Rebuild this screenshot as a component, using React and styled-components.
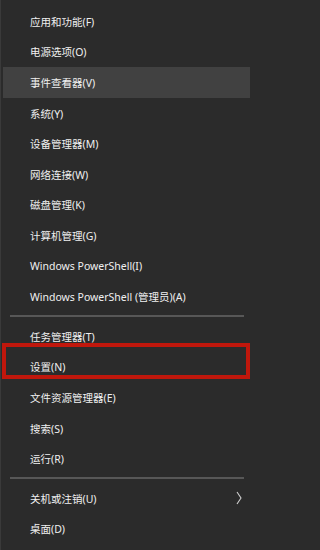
import React from "react";
import styled, { createGlobalStyle } from "styled-components";

const GlobalStyles = createGlobalStyle`
  html, body {
    margin: 0;
    padding: 0;
    background: #2b2b2b;
  }
`;

const Menu = styled.div`
  width: 250px;
  height: 550px;
  box-sizing: border-box;
  background: #2b2b2b;
  border-left: 1px solid #3a3a3a;
  padding: 6px 0 0 2px;
  overflow: hidden;
  font-family: "Noto Sans", "Noto Sans CJK SC", sans-serif;
  font-size: 10.5px;
  color: #f0f0f0;
`;

const Item = styled.div`
  position: relative;
  display: flex;
  align-items: center;
  height: 30.6px;
  padding: 0 8px 0 27px;
  background: ${(p) => (p.$hover ? "#414141" : "transparent")};
  white-space: nowrap;

  ${(p) =>
    p.$marked &&
    `
    &::after {
      content: "";
      position: absolute;
      top: -8.6px;
      left: -1px;
      right: 0;
      height: 36px;
      box-sizing: border-box;
      border: 4px solid #c0170c;
    }
  `}
`;

const Chevron = styled.svg`
  margin-left: auto;
  width: 6px;
  height: 14px;
`;

const Separator = styled.div`
  padding: 3px 6px 4px 7px;

  &::before {
    content: "";
    display: block;
    height: 2px;
    background: #575757;
  }
`;

const groups = [
  [
    { label: "应用和功能(F)" },
    { label: "电源选项(O)" },
    { label: "事件查看器(V)", hover: true },
    { label: "系统(Y)" },
    { label: "设备管理器(M)" },
    { label: "网络连接(W)" },
    { label: "磁盘管理(K)" },
    { label: "计算机管理(G)" },
    { label: "Windows PowerShell(I)" },
    { label: "Windows PowerShell (管理员)(A)" },
  ],
  [
    { label: "任务管理器(T)" },
    { label: "设置(N)", marked: true },
    { label: "文件资源管理器(E)" },
    { label: "搜索(S)" },
    { label: "运行(R)" },
  ],
  [
    { label: "关机或注销(U)", sub: true },
    { label: "桌面(D)" },
  ],
];

function App() {
  return (
    <Menu>
      <GlobalStyles />
      {groups.map((group, gi) => (
        <React.Fragment key={gi}>
          {gi > 0 && <Separator />}
          {group.map((item) => (
            <Item key={item.label} $hover={item.hover} $marked={item.marked}>
              {item.label}
              {item.sub && (
                <Chevron viewBox="0 0 6 14">
                  <polyline points="1,1 5,7 1,13" fill="none" stroke="#cfcfcf" strokeWidth="1.1" />
                </Chevron>
              )}
            </Item>
          ))}
        </React.Fragment>
      ))}
    </Menu>
  );
}

export default App;
